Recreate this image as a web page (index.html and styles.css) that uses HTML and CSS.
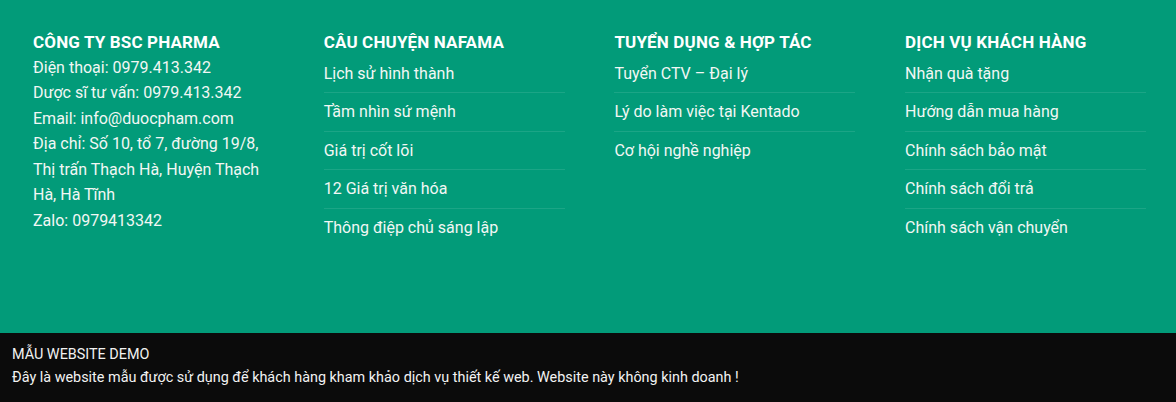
FILE: index.html
```html
<!DOCTYPE html>
<html lang="vi">
<head>
<meta charset="utf-8">
<title>Footer</title>
<link rel="stylesheet" href="styles.css">
</head>
<body>
<footer class="footer">
  <div class="footer-main">
    <div class="col">
      <h3 class="col-title">CÔNG TY BSC PHARMA</h3>
      <div class="info">
        <p>Điện thoại: 0979.413.342</p>
        <p>Dược sĩ tư vấn: 0979.413.342</p>
        <p>Email: info@duocpham.com</p>
        <p>Địa chỉ: Số 10, tổ 7, đường 19/8, Thị trấn Thạch Hà, Huyện Thạch Hà, Hà Tĩnh</p>
        <p>Zalo: 0979413342</p>
      </div>
    </div>
    <div class="col">
      <h3 class="col-title">CÂU CHUYỆN NAFAMA</h3>
      <ul class="links">
        <li><a href="#">Lịch sử hình thành</a></li>
        <li><a href="#">Tầm nhìn sứ mệnh</a></li>
        <li><a href="#">Giá trị cốt lõi</a></li>
        <li><a href="#">12 Giá trị văn hóa</a></li>
        <li><a href="#">Thông điệp chủ sáng lập</a></li>
      </ul>
    </div>
    <div class="col">
      <h3 class="col-title">TUYỂN DỤNG &amp; HỢP TÁC</h3>
      <ul class="links">
        <li><a href="#">Tuyển CTV – Đại lý</a></li>
        <li><a href="#">Lý do làm việc tại Kentado</a></li>
        <li><a href="#">Cơ hội nghề nghiệp</a></li>
      </ul>
    </div>
    <div class="col">
      <h3 class="col-title">DỊCH VỤ KHÁCH HÀNG</h3>
      <ul class="links">
        <li><a href="#">Nhận quà tặng</a></li>
        <li><a href="#">Hướng dẫn mua hàng</a></li>
        <li><a href="#">Chính sách bảo mật</a></li>
        <li><a href="#">Chính sách đổi trả</a></li>
        <li><a href="#">Chính sách vận chuyển</a></li>
      </ul>
    </div>
  </div>
  <div class="footer-bar">
    <p class="bar-title">MẪU WEBSITE DEMO</p>
    <p class="bar-text">Đây là website mẫu được sử dụng để khách hàng kham khảo dịch vụ thiết kế web. Website này không kinh doanh !</p>
  </div>
</footer>
</body>
</html>
```
FILE: styles.css
```css
* { box-sizing: border-box; }
html, body { margin: 0; padding: 0; }
body {
  font-family: Roboto, "Liberation Sans", Arial, sans-serif;
  background: #0b0b0b;
}
.footer-main {
  background: #029b79;
  height: 333px;
  padding: 28.5px 0 0 33px;
  display: grid;
  grid-template-columns: repeat(4, 241px);
  column-gap: 49.7px;
  align-items: start;
}
.col-title {
  margin: 0;
  font-size: 17px;
  line-height: 26px;
  font-weight: 700;
  color: #ffffff;
  letter-spacing: 0.15px;
}
.info p {
  margin: 0;
  font-size: 16px;
  line-height: 25.5px;
  color: #f2f7f4;
}
.links {
  list-style: none;
  margin: 0;
  padding: 0;
}
.links li {
  padding: 6px 0;
  line-height: 25.5px;
  border-bottom: 1px solid rgba(255, 255, 255, 0.1);
}
.links li:last-child { border-bottom: none; }
.links a {
  color: #f2f7f4;
  text-decoration: none;
  font-size: 16px;
}
.footer-bar {
  background: #0b0b0b;
  height: 69px;
  padding: 9.5px 12px 0;
  color: #f2f2f2;
}
.footer-bar p {
  margin: 0;
  font-size: 14.4px;
  line-height: 23px;
}
```
